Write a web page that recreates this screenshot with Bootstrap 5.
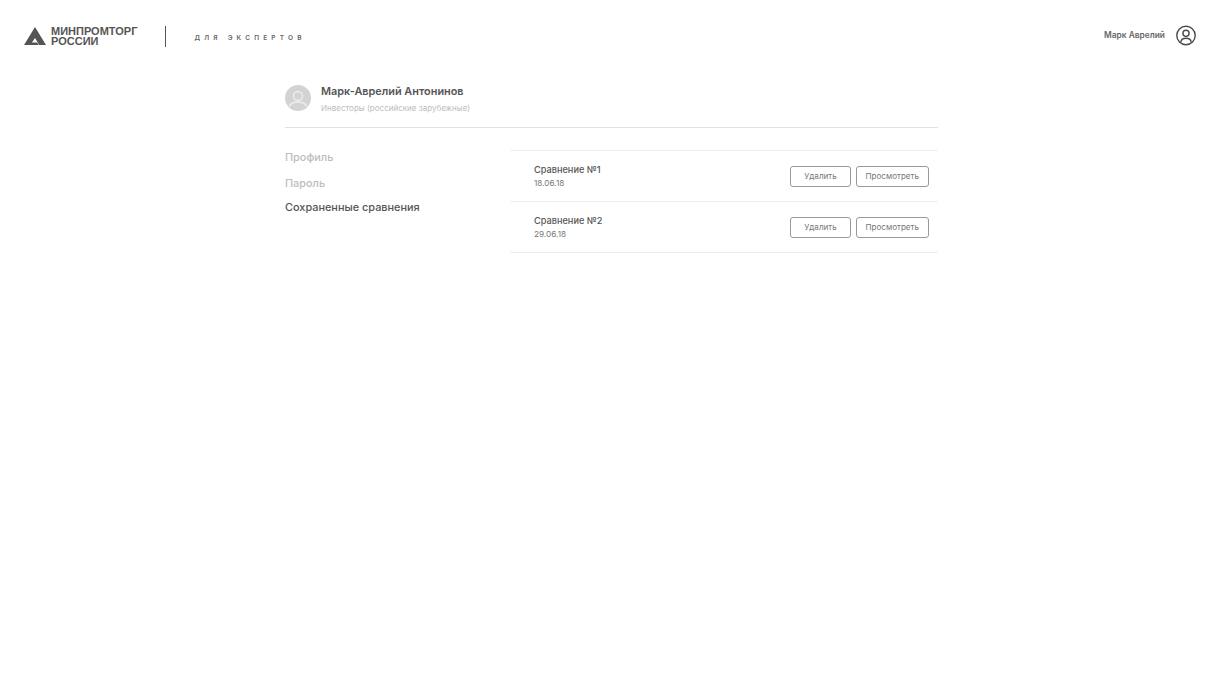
<!DOCTYPE html>
<html lang="ru">
<head>
  <title>Минпромторг России — для экспертов</title>
  <meta charset="utf-8">
  <meta name="viewport" content="width=device-width, initial-scale=1">
  <link href="https://cdn.jsdelivr.net/npm/bootstrap@5.3.3/dist/css/bootstrap.min.css" rel="stylesheet">
  <script src="https://cdn.jsdelivr.net/npm/bootstrap@5.3.3/dist/js/bootstrap.bundle.min.js"></script>
  <style>
    html, body { background: #fff; }
    body { font-family: Inter, "Liberation Sans", sans-serif; color: #4a4a4a; height: 687px; overflow: hidden; }
    .site-top { padding: 25px 25px 0 24px; height: 70px; }
    .brand-logo { margin-top: 2px; }
    .brand-name { font-family: "Liberation Sans", sans-serif; font-size: 11px; line-height: 10px; font-weight: 700; color: #555; margin-left: 5px; margin-top: 1px; }
    .brand-rule { width: 1px; height: 21px; background: #555; margin: 1px 28px 0 28px; }
    .brand-sub { font-size: 6.5px; line-height: 8px; font-weight: 600; letter-spacing: 4.2px; color: #666; margin-top: 9px; }
    .user-name { font-size: 8.4px; font-weight: 600; color: #666; margin-right: 11px; }
    .page-wrap { width: 653px; margin-left: 285px; }
    .who { height: 58px; border-bottom: 1px solid #e2e2e2; padding-top: 15px; }
    .who-text { margin-left: 10px; }
    .who-name { font-size: 10.9px; font-weight: 600; line-height: 14px; color: #555; margin-top: -1px; }
    .who-role { font-size: 8px; line-height: 10px; color: #bdbdbd; margin-top: 5px; }
    .side-menu { width: 225px; padding-top: 22px; }
    .side-link { display: block; font-size: 10.9px; line-height: 14px; font-weight: 500; color: #bdbdbd; text-decoration: none; margin-bottom: 12px; }
    .side-link.on { color: #555; margin-top: -2px; }
    .saved-list { padding-top: 22px; }
    .saved-row { height: 51px; border-top: 1px solid #eee; padding: 0 9px 0 24px; }
    .saved-row:last-child { height: 52px; border-bottom: 1px solid #eee; }
    .saved-title { font-size: 9.2px; line-height: 12px; font-weight: 500; color: #555; }
    .saved-date { font-size: 8.2px; line-height: 10px; color: #777; margin-top: 2px; }
    .saved-btns { gap: 4.5px; }
    .btn-thin { font-size: 8.1px; line-height: 10px; color: #777; border: 1px solid #999; border-radius: 3px; height: 21px; padding: 0; background: #fff; }
    .btn-del { width: 61px; }
    .btn-see { width: 73.5px; }
  </style>
</head>
<body>

<header class="site-top d-flex justify-content-between align-items-start">
  <div class="d-flex align-items-start">
    <svg class="brand-logo" width="22" height="18" viewBox="0 0 22 18">
      <path fill="#555" fill-rule="evenodd" d="M11 0 22 18H15.200L11 11 7.900 15.500H13.100L14.700 18H0z"/>
    </svg>
    <div class="brand-name">МИНПРОМТОРГ<br>РОССИИ</div>
    <div class="brand-rule"></div>
    <div class="brand-sub">ДЛЯ ЭКСПЕРТОВ</div>
  </div>
  <div class="d-flex align-items-center">
    <span class="user-name">Марк Аврелий</span>
    <svg width="20" height="21" viewBox="0 0 20 21" fill="none" stroke="#4a4a4a" stroke-width="1.400">
      <circle cx="10" cy="10.500" r="9.200"/>
      <circle cx="10" cy="8.300" r="3.100"/>
      <path d="M4.800 16.800c.5-2.600 2.200-3.600 5.200-3.600s4.700 1 5.200 3.600"/>
    </svg>
  </div>
</header>

<main class="page-wrap">
  <div class="who d-flex">
    <svg width="26" height="26" viewBox="0 0 26 26" class="flex-shrink-0">
      <circle cx="13" cy="13" r="13" fill="#d3d3d3"/>
      <circle cx="13" cy="11" r="4.500" fill="none" stroke="#eee" stroke-width="1.500"/>
      <path d="M4.500 21.500c1-3.500 4-4.500 8.500-4.500s7.500 1 8.500 4.500" fill="none" stroke="#eee" stroke-width="1.500"/>
    </svg>
    <div class="who-text">
      <div class="who-name">Марк-Аврелий Антонинов</div>
      <div class="who-role">Инвесторы (российские зарубежные)</div>
    </div>
  </div>

  <div class="d-flex">
    <nav class="side-menu flex-shrink-0">
      <a class="side-link" href="#">Профиль</a>
      <a class="side-link" href="#">Пароль</a>
      <a class="side-link on" href="#">Сохраненные сравнения</a>
    </nav>
    <div class="saved-list flex-grow-1">
      <div class="saved-row d-flex justify-content-between align-items-center">
        <div>
          <div class="saved-title">Сравнение №1</div>
          <div class="saved-date">18.06.18</div>
        </div>
        <div class="d-flex saved-btns">
          <button type="button" class="btn btn-thin btn-del">Удалить</button>
          <button type="button" class="btn btn-thin btn-see">Просмотреть</button>
        </div>
      </div>
      <div class="saved-row d-flex justify-content-between align-items-center">
        <div>
          <div class="saved-title">Сравнение №2</div>
          <div class="saved-date">29.06.18</div>
        </div>
        <div class="d-flex saved-btns">
          <button type="button" class="btn btn-thin btn-del">Удалить</button>
          <button type="button" class="btn btn-thin btn-see">Просмотреть</button>
        </div>
      </div>
    </div>
  </div>
</main>

</body>
</html>
